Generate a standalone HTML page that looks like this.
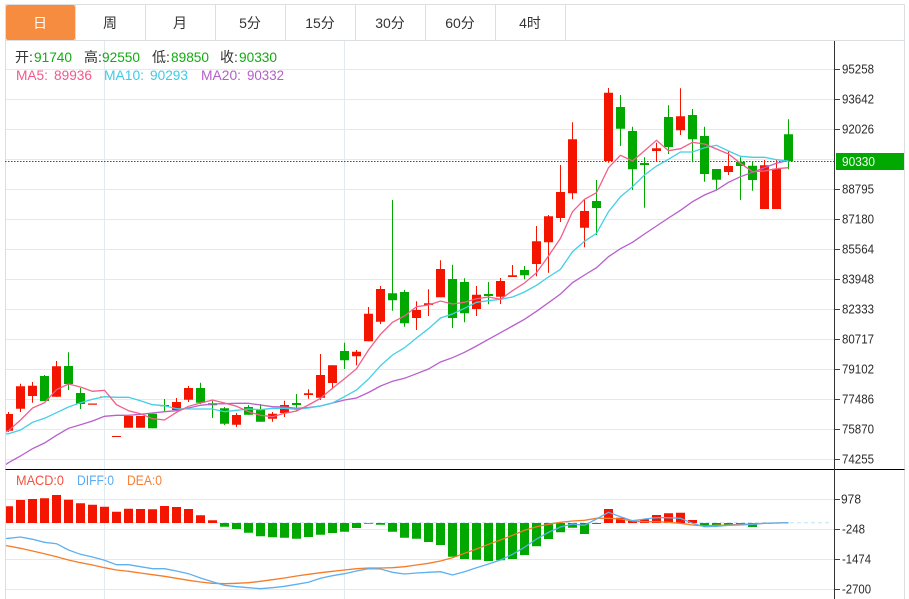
<!DOCTYPE html>
<html><head><meta charset="utf-8"><style>
html,body{margin:0;padding:0;background:#fff;width:909px;height:599px;overflow:hidden}
svg{display:block}
text{font-family:"Liberation Sans","Noto Sans CJK SC",sans-serif}
</style></head><body>
<svg width="909" height="599" viewBox="0 0 909 599" xmlns="http://www.w3.org/2000/svg">
<defs>
<clipPath id="c"><rect x="6" y="41" width="828" height="428"/></clipPath>
<clipPath id="m"><rect x="6" y="470" width="828" height="129"/></clipPath>
</defs>
<rect x="6" y="5" width="69" height="35" rx="2" fill="#f58c3f"/>
<path d="M5.500 4.500H904.500M5.500 40.500H904.500M5.500 4.500V599M904.500 4.500V599M75.500 5V40M145.500 5V40M215.500 5V40M285.500 5V40M355.500 5V40M425.500 5V40M495.500 5V40M565.500 5V40" stroke="#dcdfe2" fill="none"/>
<g font-size="14" fill="#333" text-anchor="middle">
<text x="40" y="28" fill="#fff">日</text><text x="110" y="28">周</text><text x="180" y="28">月</text><text x="250" y="28">5分</text><text x="320" y="28">15分</text><text x="390" y="28">30分</text><text x="460" y="28">60分</text><text x="530" y="28">4时</text>
</g>
<path d="M6 69.500H834M6 99.500H834M6 129.500H834M6 159.500H834M6 189.500H834M6 219.500H834M6 249.500H834M6 279.500H834M6 309.500H834M6 339.500H834M6 369.500H834M6 399.500H834M6 429.500H834M6 459.500H834M6 499.500H834M6 529.500H834M6 559.500H834M6 589.500H834M104.500 41V599M344.500 41V599" stroke="#e2eaf0" fill="none"/>
<path d="M5 161.500H840" stroke="#0a7a0a" stroke-dasharray="1.500 1.500" fill="none"/>
<g clip-path="url(#c)">
<path stroke="#f31500" fill="none" d="M8.500 412V432M20.500 383.700V412M32.500 382V402.700M56.500 361V396.700M188.500 386V402M176.500 398V410M236.500 413V427M272.500 412V421.700M284.500 400.700V417M308.500 389.300V398.700M320.500 354V400M332.500 365.300V389.300M356.500 350V365.300M368.500 307V341.300M380.500 286V324M416.500 301.300V330M428.500 289.300V316M440.500 260.300V297.300M476.500 286V316M500.500 278V304M512.500 265V277M536.500 226V276.300M548.500 215V272.700M560.500 165V222M572.500 122.300V199.300M584.500 200V247.300M608.500 88V162.700M656.500 142.700V161.700M680.500 88.300V135M728.500 150.700V175M764.500 160V209M776.500 160V209"/>
<path fill="#f31500" d="M4 414h9v16.700h-9zM16 386.300h9v22.400h-9zM28 385.700h9v10.300h-9zM52 366.300h9v30.400h-9zM88 403.500h9v1.300h-9zM100 396.500h9v1h-9zM112 436h9v1h-9zM124 416h9v11.700h-9zM136 416h9v11.700h-9zM172 402h9v8h-9zM184 388h9v11.700h-9zM232 415h9v9.700h-9zM268 413.700h9v5h-9zM280 405h9v8h-9zM304 393.300h9v1.700h-9zM316 375h9v22.700h-9zM328 365.300h9v17.700h-9zM352 351.700h9v4.600h-9zM364 313.700h9v27.600h-9zM376 289h9v32.700h-9zM412 310h9v8h-9zM424 303.300h9v1.700h-9zM436 269h9v28.300h-9zM472 294.700h9v14.300h-9zM496 281h9v15.700h-9zM508 275.300h9v1.700h-9zM532 241.300h9v22.700h-9zM544 216.300h9v26h-9zM556 192h9v26h-9zM568 139.300h9v54h-9zM580 211h9v16.700h-9zM604 92.700h9v68.300h-9zM652 148.300h9v2.700h-9zM676 116.300h9v14h-9zM724 166h9v6h-9zM760 165.300h9v43.700h-9zM772 168.700h9v40.300h-9z"/>
<path stroke="#00a800" fill="none" d="M44.500 375V401M68.500 352.300V390M80.500 388V409M152.500 413.700V428.300M164.500 399V411M200.500 382.700V404M212.500 400.700V418M224.500 407V425M248.500 405V414.700M260.500 404V421.700M296.500 394V411M344.500 342.700V369M392.500 200V310.700M404.500 290V326.700M452.500 264.700V328M464.500 278.300V322.300M488.500 282V304.300M524.500 266V279.300M596.500 180V235M620.500 95V146M632.500 126.700V190M644.500 157.300V207.700M668.500 105.300V154M692.500 109V162.300M704.500 126.700V181.700M716.500 169V190.700M740.500 157.300V200M752.500 161V190.700M788.500 119.300V169.300"/>
<path fill="#00a800" d="M40 376h9v25h-9zM64 366h9v18h-9zM76 393h9v11h-9zM148 413.700h9v14.600h-9zM160 405h9v1.300h-9zM196 388h9v14.700h-9zM208 403.300h9v2h-9zM220 408.300h9v15.400h-9zM244 407h9v7.700h-9zM256 409.700h9v12h-9zM292 403h9v2h-9zM340 351h9v9.300h-9zM388 293.300h9v7h-9zM400 292h9v31.300h-9zM448 279h9v39h-9zM460 282h9v31.300h-9zM484 294h9v2h-9zM520 270h9v5.300h-9zM592 201h9v7h-9zM616 107h9v21.700h-9zM628 131h9v38.300h-9zM640 163h9v2h-9zM664 117h9v30h-9zM688 115h9v24.300h-9zM700 136h9v38h-9zM712 169h9v10.700h-9zM736 161.700h9v4.300h-9zM748 165.700h9v14.300h-9zM784 134.300h9v27h-9z"/>
<polyline fill="none" stroke="#b860cc" stroke-width="1.300" points="5,465 8.500,462.700 20.500,456 32.500,448.700 44.500,443 56.500,435.300 68.500,428.300 80.500,424.700 92.500,421 104.500,416.300 116.500,415.300 128.500,415.300 140.500,414.300 152.500,413 164.500,411.700 176.500,410.700 188.500,408 200.500,405.300 212.500,404 224.500,403.700 236.500,403.300 248.500,403.300 260.500,405 272.500,406.700 284.500,407 296.500,408.300 308.500,407.500 320.500,406 332.500,403 344.500,400 356.500,398 368.500,392.500 380.500,386 392.500,381.300 404.500,378.300 416.500,373.700 428.500,369 440.500,362 452.500,357.700 464.500,352.300 476.500,346 488.500,339.300 500.500,332.700 512.500,326 524.500,319.300 536.500,311.300 548.500,302.700 560.500,294 572.500,282.700 584.500,275 596.500,267.700 608.500,256.700 620.500,248.700 632.500,242.300 644.500,234 656.500,226 668.500,218 680.500,210.300 692.500,201.700 704.500,195 716.500,190 728.500,182.300 740.500,176.700 752.500,172.300 764.500,167.700 776.500,163.300 788.500,160.300"/>
<polyline fill="none" stroke="#44cfe6" stroke-width="1.300" points="5,433.900 8.500,433.700 20.500,430 32.500,422.300 44.500,418.300 56.500,412.700 68.500,407 80.500,402.700 92.500,399.300 104.500,396.700 116.500,397.300 128.500,397.300 140.500,400.700 152.500,404.700 164.500,405.700 176.500,408.700 188.500,409 200.500,409 212.500,409 224.500,411.700 236.500,410.300 248.500,409 260.500,409.700 272.500,408.300 284.500,408.300 296.500,409.300 308.500,408 320.500,406 332.500,403 344.500,396.700 356.500,390 368.500,379 380.500,365.700 392.500,355 404.500,347.700 416.500,338 428.500,328.700 440.500,318 452.500,314 464.500,308.300 476.500,302.300 488.500,300.700 500.500,299.300 512.500,297 524.500,292 536.500,285.300 548.500,277 560.500,269.300 572.500,251.700 584.500,241.300 596.500,233.300 608.500,211.700 620.500,196.700 632.500,186.700 644.500,175 656.500,166 668.500,159.300 680.500,152 692.500,152 704.500,147.700 716.500,145.300 728.500,151 740.500,156.300 752.500,157.300 764.500,157.300 776.500,159.700 788.500,161"/>
<polyline fill="none" stroke="#f0608a" stroke-width="1.300" points="5,432 8.500,430.700 20.500,420 32.500,408 44.500,402.700 56.500,389.700 68.500,384 80.500,387 92.500,391.300 104.500,390.300 116.500,404.700 128.500,410.700 140.500,413.700 152.500,418.700 164.500,420 176.500,412.300 188.500,406.300 200.500,403 212.500,400 224.500,403 236.500,406.300 248.500,411.700 260.500,415.300 272.500,416.700 284.500,413.300 296.500,411 308.500,405 320.500,398.300 332.500,388.300 344.500,378.700 356.500,368.700 368.500,350 380.500,334.300 392.500,322.300 404.500,316 416.500,306.700 428.500,305 440.500,301 452.500,304 464.500,302.300 476.500,298.700 488.500,297 500.500,299.300 512.500,290.700 524.500,283 536.500,272.700 548.500,256 560.500,238.300 572.500,211.700 584.500,199.300 596.500,192.700 608.500,167.700 620.500,155.300 632.500,161 644.500,150.700 656.500,140.300 668.500,150.700 680.500,148.700 692.500,142.300 704.500,144 716.500,149 728.500,154 740.500,163.300 752.500,171.700 764.500,171 776.500,168.700 788.500,167.700"/>
</g>
<path d="M5.500 469.500H904.500" stroke="#000" fill="none"/>
<path d="M834.500 41V599" stroke="#333" fill="none"/>
<path d="M835 69.500h5M835 99.500h5M835 129.500h5M835 189.500h5M835 219.500h5M835 249.500h5M835 279.500h5M835 309.500h5M835 339.500h5M835 369.500h5M835 399.500h5M835 429.500h5M835 459.500h5M835 499.500h5M835 529.500h5M835 559.500h5M835 589.500h5" stroke="#444" fill="none"/>
<rect x="836" y="153" width="68" height="17" fill="#00a800"/>
<g font-size="13" fill="#2b2b2b">
<text x="842" y="73.500" textLength="32" lengthAdjust="spacingAndGlyphs">95258</text>
<text x="842" y="103.500" textLength="32" lengthAdjust="spacingAndGlyphs">93642</text>
<text x="842" y="133.500" textLength="32" lengthAdjust="spacingAndGlyphs">92026</text>
<text x="842" y="166" textLength="33" lengthAdjust="spacingAndGlyphs" fill="#fff">90330</text>
<text x="842" y="193.500" textLength="32" lengthAdjust="spacingAndGlyphs">88795</text>
<text x="842" y="223.500" textLength="32" lengthAdjust="spacingAndGlyphs">87180</text>
<text x="842" y="253.500" textLength="32" lengthAdjust="spacingAndGlyphs">85564</text>
<text x="842" y="283.500" textLength="32" lengthAdjust="spacingAndGlyphs">83948</text>
<text x="842" y="313.500" textLength="32" lengthAdjust="spacingAndGlyphs">82333</text>
<text x="842" y="343.500" textLength="32" lengthAdjust="spacingAndGlyphs">80717</text>
<text x="842" y="373.500" textLength="32" lengthAdjust="spacingAndGlyphs">79102</text>
<text x="842" y="403.500" textLength="32" lengthAdjust="spacingAndGlyphs">77486</text>
<text x="842" y="433.500" textLength="32" lengthAdjust="spacingAndGlyphs">75870</text>
<text x="842" y="463.500" textLength="32" lengthAdjust="spacingAndGlyphs">74255</text>
<text x="841" y="503.500" textLength="20" lengthAdjust="spacingAndGlyphs">978</text>
<text x="842" y="533.500" textLength="23" lengthAdjust="spacingAndGlyphs">-248</text>
<text x="842" y="563.500" textLength="29" lengthAdjust="spacingAndGlyphs">-1474</text>
<text x="842" y="593.500" textLength="29" lengthAdjust="spacingAndGlyphs">-2700</text>
</g>
<g font-size="14" fill="#333">
<text x="15" y="62">开:</text><text x="84" y="62">高:</text><text x="152" y="62">低:</text><text x="220" y="62">收:</text>
<g fill="#12ab12">
<text x="34" y="62" textLength="38" lengthAdjust="spacingAndGlyphs">91740</text>
<text x="102" y="62" textLength="38" lengthAdjust="spacingAndGlyphs">92550</text>
<text x="171" y="62" textLength="38" lengthAdjust="spacingAndGlyphs">89850</text>
<text x="239" y="62" textLength="38" lengthAdjust="spacingAndGlyphs">90330</text>
</g>
<g fill="#f25a8a"><text x="16" y="80" textLength="32" lengthAdjust="spacingAndGlyphs">MA5:</text><text x="54" y="80" textLength="38" lengthAdjust="spacingAndGlyphs">89936</text></g>
<g fill="#3fcbe4"><text x="104" y="80" textLength="40" lengthAdjust="spacingAndGlyphs">MA10:</text><text x="150" y="80" textLength="38" lengthAdjust="spacingAndGlyphs">90293</text></g>
<g fill="#b45ecb"><text x="201" y="80" textLength="40" lengthAdjust="spacingAndGlyphs">MA20:</text><text x="247" y="80" textLength="37" lengthAdjust="spacingAndGlyphs">90332</text></g>
<text x="16" y="485" fill="#f4523f" textLength="48" lengthAdjust="spacingAndGlyphs">MACD:0</text>
<text x="77" y="485" fill="#5aabf0" textLength="37" lengthAdjust="spacingAndGlyphs">DIFF:0</text>
<text x="127" y="485" fill="#f5813a" textLength="35" lengthAdjust="spacingAndGlyphs">DEA:0</text>
</g>
<g clip-path="url(#m)">
<path d="M6 522.800H831" stroke="#bfe3f0" stroke-dasharray="4 3" fill="none"/>
<path fill="#f31500" d="M4 506.300h9V523h-9zM16 500h9v23h-9zM28 499h9v24h-9zM40 498.300h9V523h-9zM52 495h9v28h-9zM64 499.700h9V523h-9zM76 503.300h9V523h-9zM88 504.700h9V523h-9zM100 506.700h9V523h-9zM112 511.700h9V523h-9zM124 508.700h9V523h-9zM136 509h9v14h-9zM148 509.300h9V523h-9zM160 506h9v17h-9zM172 507h9v16h-9zM184 509h9v14h-9zM196 515.300h9V523h-9zM208 520.300h9V523h-9zM604 509h9v14h-9zM616 517.700h9V523h-9zM628 521h9v2h-9zM640 519.300h9V523h-9zM652 515h9v8h-9zM664 513.300h9V523h-9zM676 512.700h9V523h-9zM688 520h9v3h-9z"/>
<path fill="#00a800" d="M220 523h9v3.700h-9zM232 523h9v6h-9zM244 523h9v9.700h-9zM256 523h9v13.300h-9zM268 523h9v14.300h-9zM280 523h9v14.700h-9zM292 523h9v15.700h-9zM304 523h9v14h-9zM316 523h9v11.700h-9zM328 523h9v10h-9zM340 523h9v8.700h-9zM352 523h9v5h-9zM364 523h9v.7h-9zM376 523h9v1.700h-9zM388 523h9v8.700h-9zM400 523h9v14.700h-9zM412 523h9v15.700h-9zM424 523h9v19h-9zM436 523h9v22h-9zM448 523h9v33.700h-9zM460 523h9v36h-9zM472 523h9v36.700h-9zM484 523h9v38h-9zM496 523h9v37.300h-9zM508 523h9v36h-9zM520 523h9v32h-9zM532 523h9v23.300h-9zM544 523h9v16h-9zM556 523h9v9.300h-9zM568 523h9v4.700h-9zM580 523h9v11h-9zM592 523h9v1h-9zM700 523h9v2.500h-9zM712 523h9v3h-9zM724 523h9v2h-9zM736 523h9v2h-9zM748 523h9v4h-9zM760 523h9v1h-9z"/>
<polyline fill="none" stroke="#f57c28" stroke-width="1.300" points="5,545.500 8.500,546 20.500,548.300 32.500,551 44.500,553.700 56.500,556.700 68.500,560 80.500,562.700 92.500,565 104.500,567.700 116.500,570 128.500,571.300 140.500,573 152.500,574.700 164.500,576.300 176.500,578.300 188.500,580.300 200.500,582 212.500,583.300 224.500,583.700 236.500,583.300 248.500,582.700 260.500,581.300 272.500,579.700 284.500,578 296.500,576 308.500,574.300 320.500,572.700 332.500,571.300 344.500,570 356.500,568.700 368.500,568 380.500,568 392.500,567.700 404.500,566.700 416.500,565 428.500,563.300 440.500,561 452.500,557.700 464.500,553.300 476.500,549 488.500,544.300 500.500,540 512.500,535.300 524.500,530.300 536.500,526.700 548.500,524.300 560.500,522.300 572.500,521 584.500,520.300 596.500,518.300 608.500,518.300 620.500,519 632.500,521 644.500,521.700 656.500,521.700 668.500,522.300 680.500,523.300 692.500,525 704.500,526 716.500,525.300 728.500,525 740.500,524.300 752.500,524 764.500,523.300 776.500,523 788.500,522.700"/>
<polyline fill="none" stroke="#5eb0f0" stroke-width="1.300" points="5,538.600 8.500,538.300 20.500,537 32.500,539.300 44.500,542.300 56.500,543.700 68.500,550 80.500,554.300 92.500,557 104.500,560.300 116.500,564.700 128.500,564.700 140.500,566.700 152.500,568.700 164.500,568.700 176.500,571 188.500,573.700 200.500,578 212.500,581.700 224.500,585.300 236.500,586.700 248.500,587.700 260.500,588.700 272.500,587.700 284.500,586.300 296.500,584.300 308.500,582.300 320.500,578.300 332.500,575.700 344.500,573.700 356.500,571 368.500,568.700 380.500,569 392.500,572.300 404.500,574 416.500,573 428.500,572.300 440.500,571.700 452.500,575 464.500,571.700 476.500,567.700 488.500,564 500.500,560 512.500,554.300 524.500,547.300 536.500,539 548.500,532.300 560.500,527 572.500,524 584.500,525.300 596.500,519 608.500,512.300 620.500,516.700 632.500,520.700 644.500,519 656.500,517.700 668.500,517.700 680.500,518.300 692.500,523.300 704.500,526.700 716.500,526.300 728.500,525.300 740.500,525 752.500,524.300 764.500,523.300 776.500,523 788.500,522.700"/>
</g>
</svg>
</body></html>
